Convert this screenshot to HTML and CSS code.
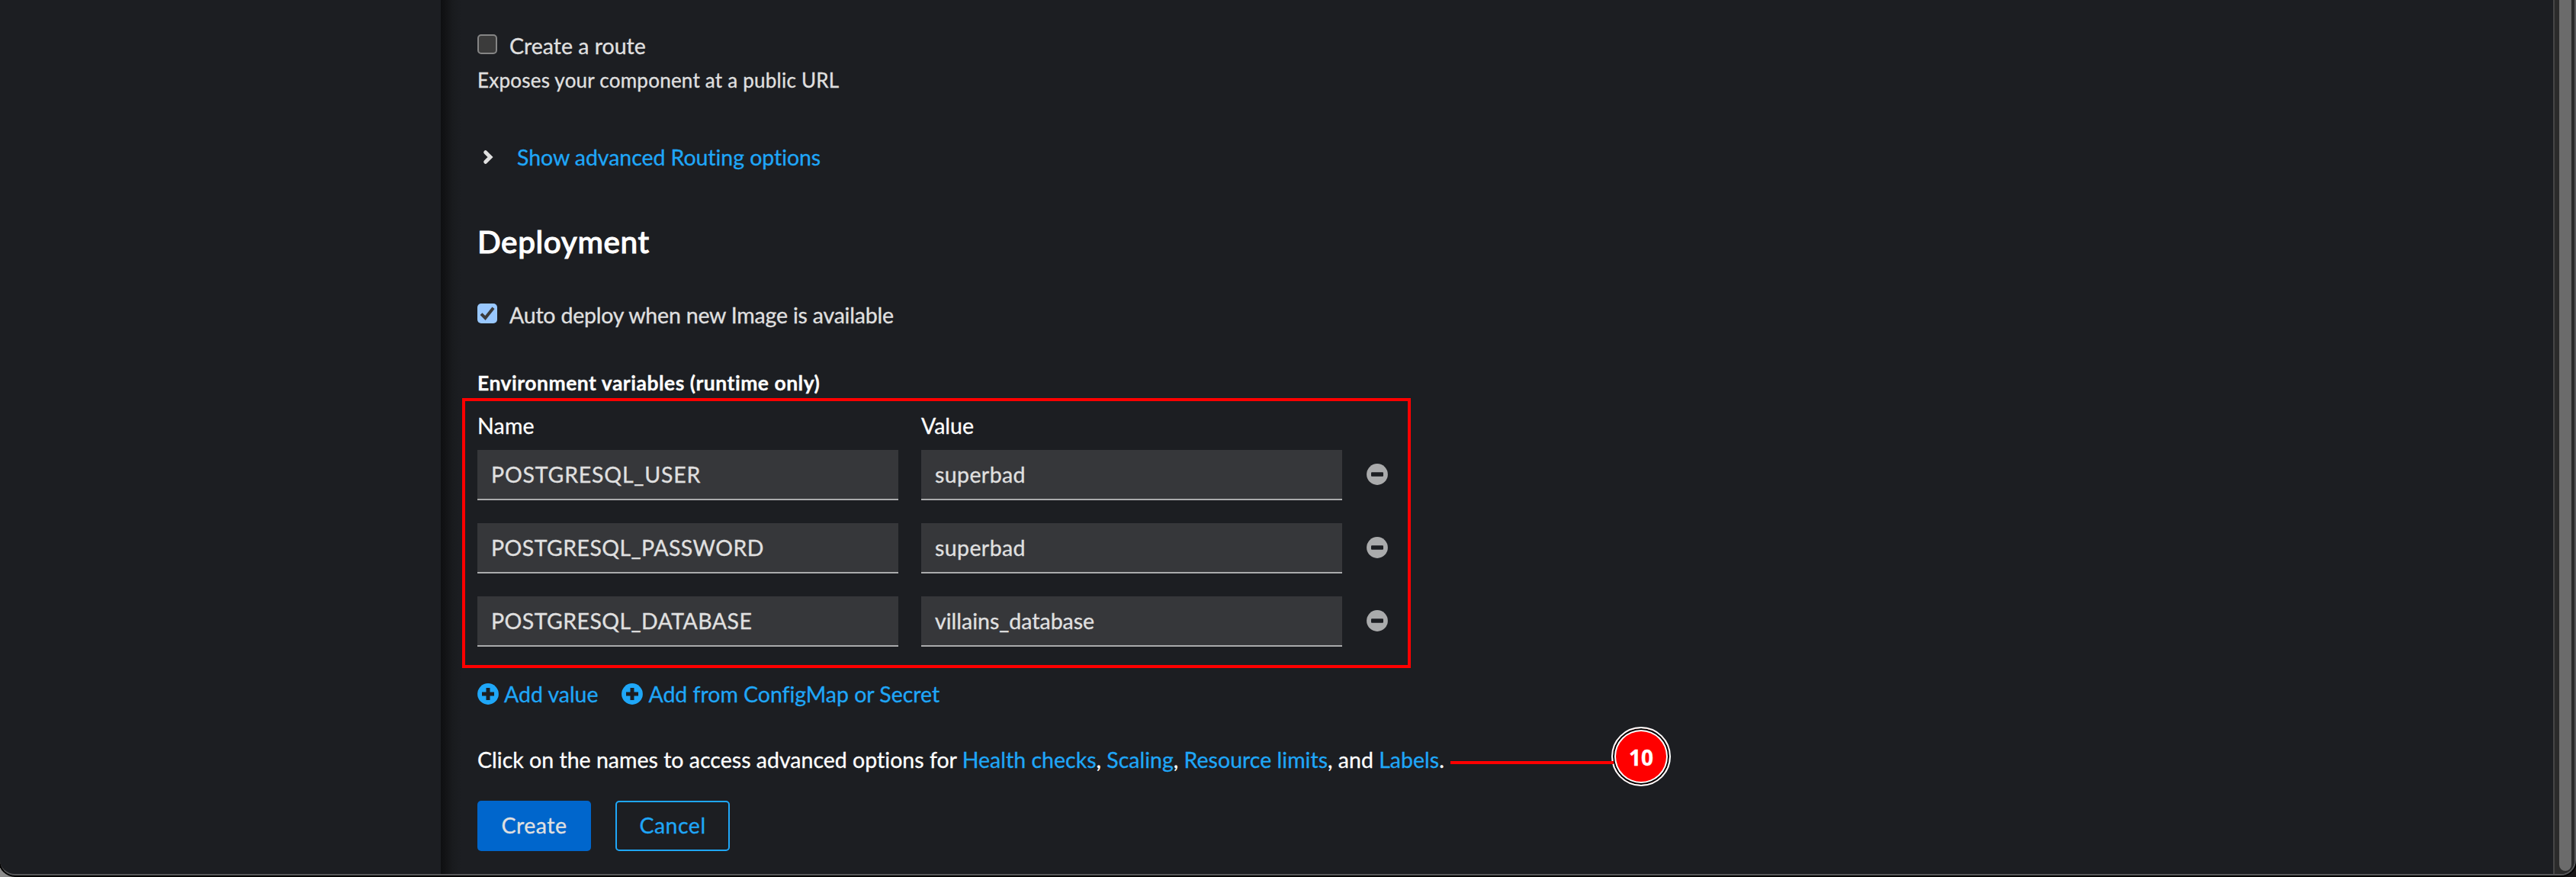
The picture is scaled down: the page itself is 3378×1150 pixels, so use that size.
FILE: index.html
```
<!DOCTYPE html>
<html lang="en">
<head>
<meta charset="utf-8">
<title>Deployment</title>
<link rel="stylesheet" href="styles.css">
</head>
<body>
<div class="window">
  <aside class="sidebar"></aside>
  <main class="content">
    <label class="check-row route"><span class="checkbox"></span><span>Create a route</span></label>
    <p class="helper">Exposes your component at a public URL</p>
    <a class="expander"><svg class="chevron" viewBox="0 0 26 26"><path d="M10.7 6.700 17 13l-6.300 6.300"/></svg><span>Show advanced Routing options</span></a>
    <h2 class="title">Deployment</h2>
    <label class="check-row auto"><span class="checkbox checked"><svg viewBox="0 0 26 26"><path d="M5 13.600 10.400 19 21 5.800"/></svg></span><span>Auto deploy when new Image is available</span></label>
    <h3 class="env-title">Environment variables (runtime only)</h3>
    <section class="env-box">
      <div class="env-row env-head"><span class="name">Name</span><span>Value</span></div>
      <div class="env-row"><div class="field key user">POSTGRESQL_USER</div><div class="field short">superbad</div><svg class="minus" viewBox="0 0 28 28"><circle cx="14" cy="14" r="13.900"/><rect x="6" y="11.200" width="16" height="5.600" rx="1"/></svg></div>
      <div class="env-row"><div class="field key">POSTGRESQL_PASSWORD</div><div class="field short">superbad</div><svg class="minus" viewBox="0 0 28 28"><circle cx="14" cy="14" r="13.900"/><rect x="6" y="11.200" width="16" height="5.600" rx="1"/></svg></div>
      <div class="env-row"><div class="field key">POSTGRESQL_DATABASE</div><div class="field">villains_database</div><svg class="minus" viewBox="0 0 28 28"><circle cx="14" cy="14" r="13.900"/><rect x="6" y="11.200" width="16" height="5.600" rx="1"/></svg></div>
    </section>
    <div class="adders">
      <a class="adder"><svg class="plus" viewBox="0 0 28 28"><circle cx="14" cy="14" r="13.900"/><path d="M14 6v16M6 14h16"/></svg><span>Add value</span></a>
      <a class="adder"><svg class="plus" viewBox="0 0 28 28"><circle cx="14" cy="14" r="13.900"/><path d="M14 6v16M6 14h16"/></svg><span>Add from ConfigMap or Secret</span></a>
    </div>
    <p class="advanced">Click on the names to access advanced options for <a>Health checks</a>, <a>Scaling</a>, <a>Resource limits</a>, and <a>Labels</a>.</p>
    <div class="actions"><button class="btn primary">Create</button><button class="btn secondary">Cancel</button></div>
  </main>
  <div class="scrollbar"><div class="thumb"></div></div>
</div>
<div class="callout">10</div>
<div class="callout-line"></div>
</body>
</html>
```
FILE: styles.css
```
* { box-sizing: border-box; }
body {
  margin: 0;
  width: 3378px;
  height: 1150px;
  overflow: hidden;
  position: relative;
  background: linear-gradient(90deg, #8c8c8c 0, #777 60px, #5a5a5a 1770px, #0b0708 1774px, #181516 100%);
  font: 28.5px/40px Lato, "Open Sans", sans-serif;
  font-variant-ligatures: none;
  -webkit-text-stroke: .3px currentColor;
  color: #e0e0e0;
}
h2, h3, p { margin: 0; }
a { color: #1fa7f8; }
.window {
  display: flex;
  width: 3378px;
  height: 1148px;
  background: #1c1e22;
  border-bottom: 2px solid #58585a;
  border-right: 2px solid #58585a;
  border-radius: 0 0 20px 20px;
  box-shadow: 0 0 0 2px #000;
  overflow: hidden;
}
.sidebar { width: 578px; flex: none; }
.content {
  flex: 1;
  padding: 40px 0 0 48px;
  background: linear-gradient(90deg, #0e0f11 0, #131416 7px, #191b1e 16px, #1c1e22 28px);
}
.check-row { display: flex; align-items: flex-start; gap: 16px; }
.route { letter-spacing: 0; }
.checkbox {
  width: 26px;
  height: 26px;
  margin-top: 5px;
  border: 2px solid #858585;
  border-radius: 5px;
  background: #3b3b3b;
}
.checked { border: 0; background: #99c8ff; }
.checkbox svg { display: block; }
.checkbox path { fill: none; stroke: #3b3b3b; stroke-width: 4; }
.helper { margin-top: 5px; font-size: 26px; letter-spacing: .23px; }
.expander { display: flex; align-items: center; gap: 26px; margin-top: 61px; letter-spacing: -.06px; }
.chevron { width: 26px; height: 26px; margin-top: -1px; }
.chevron path { fill: none; stroke: #e0e0e0; stroke-width: 5; stroke-linecap: round; }
.title {
  margin-top: 61px;
  font-size: 40.5px;
  line-height: 60px;
  font-weight: 500;
  letter-spacing: .6px;
  color: #fff;
  -webkit-text-stroke-width: 1px;
}
.auto { margin-top: 46px; letter-spacing: -.2px; }
.env-title { margin-top: 49px; font-size: 26.5px; letter-spacing: .5px; color: #fff; }
.env-box {
  display: flex;
  flex-direction: column;
  gap: 30px;
  width: 1244px;
  height: 354px;
  margin: 0 0 0 -20px;
  padding: 12px 16px;
  border: 4px solid #f00;
}
.env-row { display: grid; grid-template-columns: 552px 552px 28px; column-gap: 30px; align-items: center; }
.env-head { margin-bottom: -18px; color: #fff; }
.name { letter-spacing: .2px; }
.field {
  height: 66px;
  padding-left: 18px;
  line-height: 65px;
  background: #36373a;
  border-bottom: 2px solid #aaabac;
}
.key { letter-spacing: .42px; }
.user { letter-spacing: .8px; }
.short { letter-spacing: .4px; }
.minus { width: 28px; height: 28px; margin: -2px 0 0 2px; }
.minus circle { fill: #aaabac; }
.minus rect { fill: #1c1e22; }
.adders { display: flex; gap: 32px; margin-top: 14px; }
.adder { display: flex; align-items: center; gap: 7px; letter-spacing: -.03px; }
.adder + .adder { margin-left: -1px; }
.plus { width: 28px; height: 28px; }
.plus circle { fill: #1fa7f8; }
.plus path { stroke: #1c1e22; stroke-width: 5; }
.advanced { margin-top: 46px; color: #fff; letter-spacing: .01px; }
.actions { display: flex; gap: 32px; margin-top: 34px; }
.btn {
  width: 149px;
  height: 66px;
  padding: 0 0 2px;
  border: 0;
  border-radius: 5px;
  font: inherit;
  letter-spacing: .5px;
}
.primary { background: #06c; color: #e0e0e0; }
.secondary { width: 150px; background: none; border: 2px solid #1fa7f8; color: #1fa7f8; }
.scrollbar {
  width: 28px;
  flex: none;
  display: flex;
  padding: 0 4px 4px 6px;
  border-left: 2px solid #464646;
  background: #2b2b2b;
}
.thumb { width: 16px; background: #6b6b6b; border-radius: 0 0 8px 8px; }
.callout {
  position: absolute;
  left: 2113px;
  top: 953px;
  width: 78px;
  height: 78px;
  border: 2.500px solid #fff;
  border-radius: 50%;
  background: #f00;
  box-shadow: inset 0 0 0 2px #000, inset 0 0 0 4px #fff;
  color: #fff;
  font: bold 28px/76px "Open Sans", sans-serif;
  text-align: center;
}
.callout-line { position: absolute; left: 1902px; top: 998px; width: 214px; height: 4px; background: #f00; }
```
